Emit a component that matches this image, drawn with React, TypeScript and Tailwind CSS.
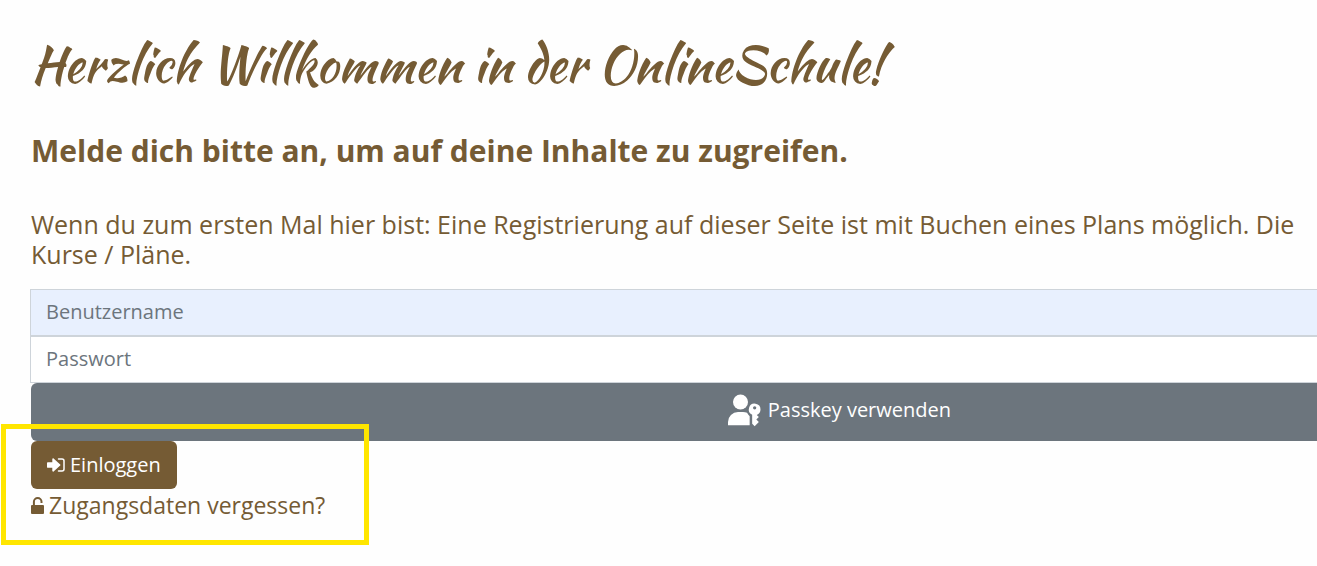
function SignInIcon() {
  return (
    <svg viewBox="0 0 18 14" className="h-[14px] w-[18px]" fill="currentColor" aria-hidden="true">
      <path d="M0 5.1c0-.5.3-.9.8-.9h4.500V1.200c0-.8.8-1.100 1.300-.6l6.600 5.800c.4.4.4.8 0 1.200l-6.600 5.800c-.5.5-1.300.2-1.300-.6V9.800H.8c-.5 0-.8-.4-.8-.9z" />
      <path d="M11.500 1H15a2 2 0 0 1 2 2v8a2 2 0 0 1-2 2h-3.500" fill="none" stroke="currentColor" strokeWidth="1.500" strokeLinecap="round" />
    </svg>
  );
}

function UnlockIcon() {
  return (
    <svg viewBox="0 0 13 17" className="h-[17px] w-[13px]" fill="currentColor" aria-hidden="true">
      <path d="M2.900 9V4.800a3.800 3.800 0 0 1 7.600 0v1.200" fill="none" stroke="currentColor" strokeWidth="2" />
      <rect y="8" width="13" height="9" rx="1" />
    </svg>
  );
}

function PasskeyIcon() {
  return (
    <svg viewBox="0 0 24 24" className="size-10" fill="currentColor" aria-hidden="true">
      <circle cx="10.5" cy="6" r="4.5" />
      <path d="M22.5,10.5a3.5,3.5,0,1,0-5,3.15V19L19,20.5,21.5,18,20,16.5,21.5,15l-1.24-1.24A3.5,3.5,0,0,0,22.5,10.5Zm-3.5,0a1,1,0,1,1,1-1A1,1,0,0,1,19,10.5Z" />
      <path d="M14.44,12.52A6,6,0,0,0,12,12H9a6,6,0,0,0-6,6v2H16V14.49A5.16,5.16,0,0,1,14.44,12.52Z" />
    </svg>
  );
}

const fieldClass =
  'block h-[47px] w-full border border-[#ced4da] px-[15px] pb-[2px] text-[20px] placeholder:text-[#6c757d] placeholder:opacity-100';

export default function App() {
  return (
    <div className="min-h-screen overflow-hidden bg-[#fefefe] pl-[30px] pt-[28px] font-['Open_Sans',sans-serif] text-[#755b34]">
      <h1 className="whitespace-nowrap pl-px font-['Kaushan_Script',cursive] text-[50px] leading-[72px]">
        Herzlich Willkommen in der OnlineSchule!
      </h1>
      <h2 className="mt-[33px] whitespace-nowrap pl-px text-[30px] font-bold leading-[36px]">
        Melde dich bitte an, um auf deine Inhalte zu zugreifen.
      </h2>
      <p className="mt-[40px] whitespace-nowrap pl-px text-[25px] leading-[30px]">
        Wenn du zum ersten Mal hier bist: Eine Registrierung auf dieser Seite ist mit Buchen eines Plans möglich. Die
        <br />
        Kurse / Pläne.
      </p>

      {/* the form runs past the right edge of the window */}
      <form className="mt-[20px] w-[125%]" onSubmit={(e) => e.preventDefault()}>
        <input type="text" aria-label="Benutzername" placeholder="Benutzername" className={`${fieldClass} bg-[#e8f0fe]`} />
        <input type="password" aria-label="Passwort" placeholder="Passwort" className={`${fieldClass} bg-white`} />
        <div className="pl-px">
          <button type="button" className="flex h-[58px] w-full items-center justify-center gap-[5px] rounded-md bg-[#6c757d] pl-1 text-[20px] text-white">
            <PasskeyIcon />
            <span className="pb-1">Passkey verwenden</span>
          </button>
          <div className="relative w-fit">
            <button type="submit" className="flex h-[48px] items-center gap-[5px] rounded-md bg-[#755b34] px-4 text-[20px] text-white">
              <SignInIcon />
              Einloggen
            </button>
            <a href="#" className="flex h-[33px] items-center gap-[5px] text-[23px]">
              <UnlockIcon />
              Zugangsdaten vergessen?
            </a>
            <div className="pointer-events-none absolute -left-[30px] -top-[17px] h-[121px] w-[368px] border-5 border-[#ffe600]" />
          </div>
        </div>
      </form>
    </div>
  );
}
